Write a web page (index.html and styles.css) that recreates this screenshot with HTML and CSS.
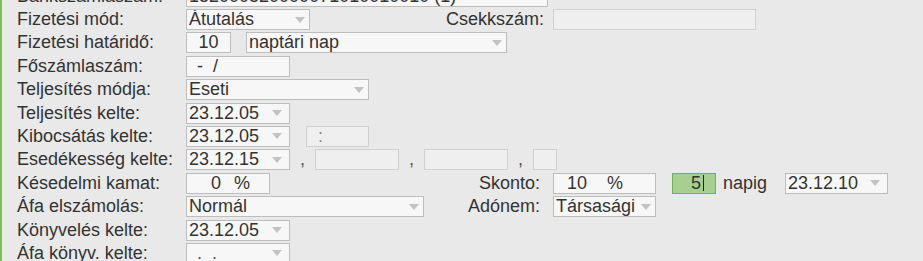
FILE: index.html
```html
<!DOCTYPE html>
<html lang="hu">
<head>
    <meta charset="UTF-8">
    <meta name="viewport" content="width=device-width, initial-scale=1.0">
    <title>Számla fejléc</title>
    <link rel="stylesheet" href="styles.css">
</head>
<body>
    <div class="form">
        <div class="row">
            <div class="label">Bankszámlaszám:</div>
            <div class="field w-acct">152000520000071010010010 (1)</div>
        </div>
        <div class="row">
            <div class="label">Fizetési mód:</div>
            <div class="main">
                <div class="field select w-mode">Átutalás<span class="arrow"></span></div>
            </div>
            <div class="side-label">Csekkszám:</div>
            <div class="field disabled w-check"></div>
        </div>
        <div class="row">
            <div class="label">Fizetési határidő:</div>
            <div class="field center w-num">10</div>
            <div class="field select w-unit">naptári nap<span class="arrow"></span></div>
        </div>
        <div class="row">
            <div class="label">Főszámlaszám:</div>
            <div class="field w-main">- &nbsp;/</div>
        </div>
        <div class="row">
            <div class="label">Teljesítés módja:</div>
            <div class="field select w-perf">Eseti<span class="arrow"></span></div>
        </div>
        <div class="row">
            <div class="label">Teljesítés kelte:</div>
            <div class="field select date w-date">23.12.05<span class="arrow"></span></div>
        </div>
        <div class="row">
            <div class="label">Kibocsátás kelte:</div>
            <div class="field select date w-date">23.12.05<span class="arrow"></span></div>
            <div class="field disabled w-time">:</div>
        </div>
        <div class="row">
            <div class="label">Esedékesség kelte:</div>
            <div class="field select date w-date">23.12.15<span class="arrow"></span></div>
            <span class="sep">,</span>
            <div class="field disabled w-part"></div>
            <span class="sep">,</span>
            <div class="field disabled w-part"></div>
            <span class="sep">,</span>
            <div class="field disabled w-tiny"></div>
        </div>
        <div class="row">
            <div class="label">Késedelmi kamat:</div>
            <div class="main">
                <div class="field w-late"><span class="late-num">0</span><span class="late-pct">%</span></div>
            </div>
            <div class="side-label">Skonto:</div>
            <div class="field w-skonto"><span class="sk-num">10</span><span class="sk-pct">%</span></div>
            <div class="field active w-days">5<span class="caret"></span></div>
            <span class="napig">napig</span>
            <div class="field select date w-date2">23.12.10<span class="arrow"></span></div>
        </div>
        <div class="row">
            <div class="label">Áfa elszámolás:</div>
            <div class="main">
                <div class="field select w-vat">Normál<span class="arrow"></span></div>
            </div>
            <div class="side-label">Adónem:</div>
            <div class="field select w-tax">Társasági<span class="arrow"></span></div>
        </div>
        <div class="row">
            <div class="label">Könyvelés kelte:</div>
            <div class="field select date w-date">23.12.05<span class="arrow"></span></div>
        </div>
        <div class="row">
            <div class="label">Áfa könyv. kelte:</div>
            <div class="field select date w-date"><span class="empty-date">. &nbsp;.</span><span class="arrow"></span></div>
        </div>
    </div>
</body>
</html>
```

FILE: styles.css
```css
* {
    margin: 0;
    padding: 0;
    box-sizing: border-box;
}

body {
    font-family: "Liberation Sans", Arial, sans-serif;
    font-size: 18px;
    color: #333;
    background-color: #e9e9e9;
    border-left: 2px solid #7dbb5e;
    height: 261px;
    overflow: hidden;
}

.form {
    margin-top: -14.4px;
    padding-left: 15px;
}

.row {
    display: flex;
    align-items: center;
    height: 21px;
    margin-bottom: 2.4px;
    white-space: nowrap;
}

.label {
    width: 169px;
    flex-shrink: 0;
}

.main {
    width: 260px;
    flex-shrink: 0;
    display: flex;
}

.side-label {
    width: 94px;
    margin-right: 13px;
    text-align: right;
    flex-shrink: 0;
}

.field {
    height: 21px;
    line-height: 19px;
    border: 1px solid #bdbdbd;
    background-color: #f7f7f7;
    padding-left: 2px;
    display: flex;
    align-items: center;
    flex-shrink: 0;
    overflow: hidden;
}

.field.disabled {
    border-color: #d0d0d0;
    background-color: #efefef;
    color: #888;
}

.field.center {
    justify-content: center;
    padding-left: 0;
}

.field.active {
    background-color: #a6cf90;
    border-color: #72b254;
    justify-content: flex-end;
    padding-right: 11px;
}

.arrow {
    margin-left: auto;
    margin-right: 4px;
    width: 0;
    height: 0;
    border-left: 5px solid transparent;
    border-right: 5px solid transparent;
    border-top: 6px solid #c2c2c2;
}

.date .arrow {
    margin-right: 7px;
}

.caret {
    width: 1px;
    height: 16px;
    margin-left: 2px;
    background-color: #222;
}

.sep {
    width: 25px;
    text-align: center;
    color: #555;
    flex-shrink: 0;
}

.napig {
    margin-left: 7px;
    margin-right: 18px;
}

.empty-date {
    padding-left: 8px;
    color: #555;
}

.w-acct { width: 362px; }
.w-mode { width: 124px; }
.w-check { width: 203px; }
.w-num { width: 45px; }
.w-unit { width: 261px; margin-left: 15px; }
.w-main { width: 104px; padding-left: 10px; }
.w-perf { width: 183px; }
.w-date { width: 104px; }
.w-time { width: 63px; margin-left: 16px; padding-left: 11px; }
.w-part { width: 84px; }
.w-tiny { width: 24px; }
.w-late { width: 84px; padding-left: 24px; }
.w-skonto { width: 103px; padding-left: 13px; }
.w-days { width: 44px; margin-left: 16px; }
.w-date2 { width: 103px; }
.w-vat { width: 238px; }
.w-tax { width: 103px; }

.late-pct { margin-left: 13px; }
.sk-pct { margin-left: 20px; }
```
